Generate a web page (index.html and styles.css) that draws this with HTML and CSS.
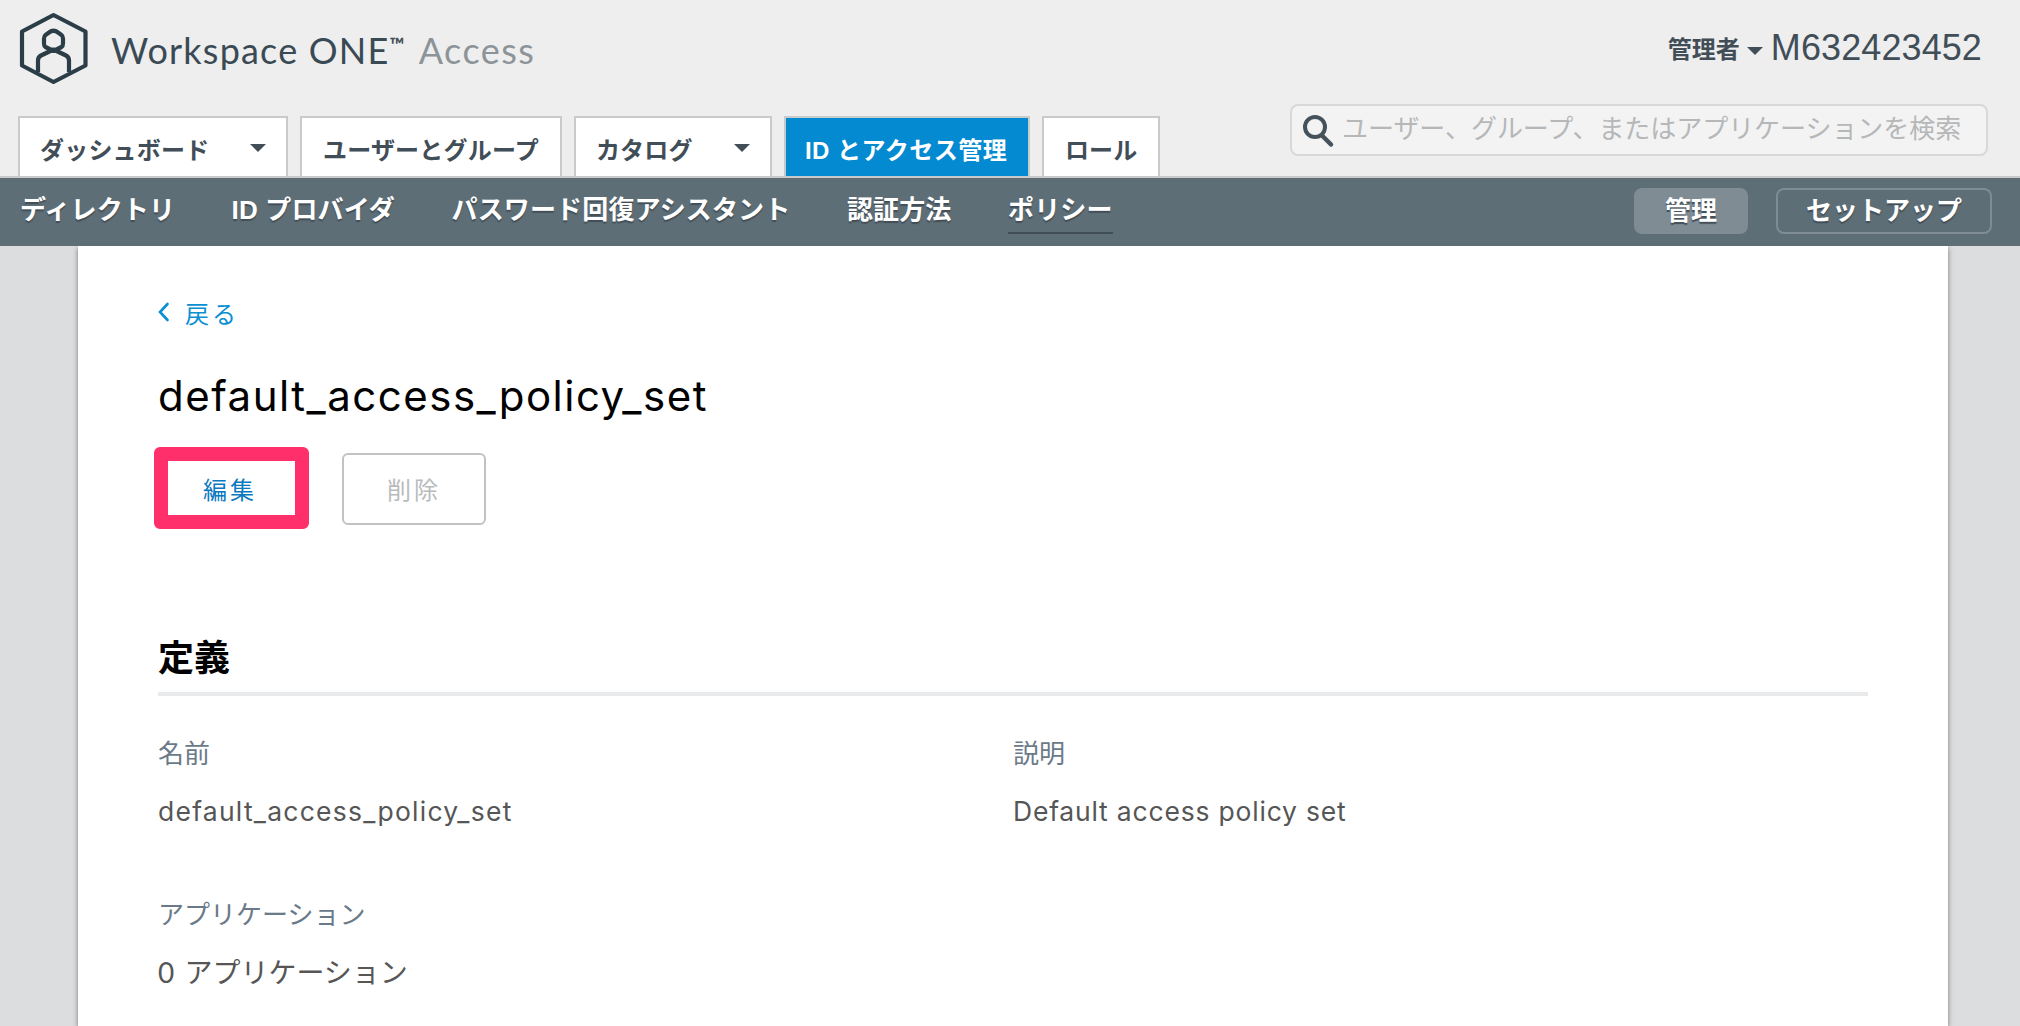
FILE: index.html
```html
<!DOCTYPE html>
<html lang="ja">
<head>
<meta charset="utf-8">
<title>Workspace ONE Access</title>
<link rel="stylesheet" href="styles.css">
</head>
<body>
<header class="header">
  <div class="brand">
    <svg class="brand-mark" width="72" height="76" viewBox="0 0 72 76" fill="none" stroke="#2b3d47" stroke-width="4.200" stroke-linejoin="round">
      <path d="M35.500 5 67.500 21.500v34L35.500 72 4 55.500v-34z"/>
      <path d="M31 22.500Q35.500 19 40 22.500L43.500 25Q45 26 45 28.500V33.500Q45 36 43.500 37L35.500 41 27.500 37Q26 36 26 33.500V28.500Q26 26 27.500 25z"/>
      <path d="M20 62V50.500Q20 47 23 45.500L35.500 39.500 48 45.500Q51 47 51 50.500V62"/>
    </svg>
    <span class="brand-name">Workspace ONE</span><span class="brand-tm">™</span><span class="brand-product">Access</span>
  </div>
  <div class="account">
    <span class="account-role">管理者</span><span class="caret"></span><span class="account-id">M632423452</span>
  </div>
  <nav class="tabs">
    <a class="tab tab-menu">ダッシュボード<span class="caret"></span></a>
    <a class="tab">ユーザーとグループ</a>
    <a class="tab tab-menu catalog">カタログ<span class="caret"></span></a>
    <a class="tab active">ID とアクセス管理</a>
    <a class="tab">ロール</a>
  </nav>
  <div class="search">
    <svg width="34" height="34" viewBox="0 0 34 34" fill="none" stroke="#46525b" stroke-linecap="round"><circle cx="13" cy="13" r="10" stroke-width="4"/><path d="M20.500 22l8.500 8.500" stroke-width="4.500"/></svg>
    <span>ユーザー、グループ、またはアプリケーションを検索</span>
  </div>
</header>
<nav class="subnav">
  <a>ディレクトリ</a>
  <a>ID プロバイダ</a>
  <a>パスワード回復アシスタント</a>
  <a>認証方法</a>
  <a class="current">ポリシー</a>
  <div class="modes"><button class="mode selected">管理</button><button class="mode setup">セットアップ</button></div>
</nav>
<main class="panel">
  <a class="back"><svg width="12" height="20" viewBox="0 0 12 20" fill="none" stroke="#0a8fd2" stroke-width="2.600" stroke-linecap="round"><path d="M9.500 2 2 10l7.500 8"/></svg>戻る</a>
  <h1 class="title">default_access_policy_set</h1>
  <div class="actions">
    <button class="action edit">編集</button>
    <button class="action delete">削除</button>
  </div>
  <h2 class="section">定義</h2>
  <dl class="fields">
    <div class="field"><dt>名前</dt><dd class="latin identifier">default_access_policy_set</dd></div>
    <div class="field"><dt>説明</dt><dd class="latin">Default access policy set</dd></div>
    <div class="field"><dt>アプリケーション</dt><dd class="count">0 アプリケーション</dd></div>
  </dl>
</main>
</body>
</html>
```
FILE: styles.css
```css
* { box-sizing: border-box; }
body {
  margin: 0;
  height: 1026px;
  overflow: hidden;
  display: flex;
  flex-direction: column;
  background: #dcdddf;
  font-family: "Liberation Sans", "Noto Sans CJK JP", sans-serif;
  color: #424e57;
}
button { font: inherit; padding: 0; }
.header {
  height: 178px;
  flex: none;
  display: grid;
  grid-template: 104px 72px / 1fr 698px;
  padding: 0 32px 0 18px;
  background: #eee;
  border-bottom: 2px solid #c8cacb;
}
.brand {
  display: flex;
  align-items: flex-start;
  padding-top: 10px;
  font: 36px/81px Lato, "Open Sans", sans-serif;
  letter-spacing: 1px;
}
.brand-mark { margin-right: 21px; }
.brand-name { color: #3a4a54; white-space: nowrap; letter-spacing: 1.2px; }
.brand-tm { font-size: 20px; line-height: 68px; font-weight: 700; letter-spacing: 0; }
.brand-product { margin-left: 14px; color: #8d9499; letter-spacing: 1.5px; }
.account {
  display: flex;
  justify-content: flex-end;
  padding-right: 6px;
  height: 94px;
  align-items: center;
}
.account-role { font-weight: 700; font-size: 24px; }
.caret {
  border: solid transparent;
  border-width: 8px 8px 0;
  border-top-color: #424e57;
}
.account .caret { margin: 8px 8px 0 7px; }
.account-id { font-size: 36px; padding-top: 2px; letter-spacing: 0.1px; }
.tabs {
  display: flex;
  gap: 12px;
  align-items: flex-end;
}
.tab {
  height: 60px;
  padding: 0 21px;
  border: 2px solid #c8cacb;
  border-bottom: 0;
  background: #fff;
  font-weight: 700;
  font-size: 24px;
  line-height: 66px;
  letter-spacing: 0.2px;
  white-space: nowrap;
}
.tab:last-child { padding-right: 20px; }
.tab-menu {
  width: 270px;
  display: flex;
  justify-content: space-between;
  padding-left: 20px;
}
.tab-menu.catalog { width: 198px; }
.tab-menu .caret { margin: 26px -1px 0 0; }
.tab.active { width: 246px; background: #048ad0; color: #fff; padding: 0 19px; letter-spacing: 0.5px; }
.search {
  height: 52px;
  display: flex;
  align-items: center;
  border: 2px solid #d7d8d8;
  border-radius: 8px;
  background: #f3f3f3;
  color: #b6b7b8;
  font-size: 26px;
  letter-spacing: -0.05px;
  white-space: nowrap;
  padding-left: 10px;
}
.search svg { margin: 2px 6px 0 0; }
.search span { margin-top: -7px; }
.subnav {
  height: 68px;
  flex: none;
  display: flex;
  align-items: flex-start;
  gap: 56.5px;
  padding: 10px 28px 0 20px;
  background: #5e6e76;
  color: #fff;
  font-weight: 700;
  font-size: 26px;
  line-height: 45px;
  letter-spacing: 0.15px;
  text-shadow: 0 2px 1px #424e57;
  white-space: nowrap;
}
.subnav a { height: 46px; }
.subnav .current { border-bottom: 2px solid #424e57; }
.modes { display: flex; gap: 28px; margin-left: auto; }
.mode {
  width: 114px;
  height: 46px;
  border: 2px solid #7f8c94;
  border-radius: 8px;
  background: none;
  color: #fff;
  line-height: 38px;
  padding-bottom: 1px;
  text-shadow: inherit;
}
.mode.selected { background: #7f8c94; }
.mode.setup { width: 216px; }
.panel {
  flex: 1;
  width: 1870px;
  margin-left: 78px;
  padding: 48px 80px 0;
  background: #fff;
  box-shadow: 0 2px 5px #777;
  clip-path: inset(0 -10px);
  font-family: Lato, "Noto Sans CJK JP", sans-serif;
}
.back {
  display: flex;
  align-items: center;
  height: 36px;
  color: #0a8fd2;
  font-size: 24px;
  letter-spacing: 3px;
}
.back svg { margin-right: 15px; }
.title {
  margin: 34px 0 0;
  height: 64px;
  font-family: Inter, "Open Sans", sans-serif;
  font-weight: 400;
  font-size: 42px;
  line-height: 64px;
  letter-spacing: 1.5px;
  color: #000;
}
.actions { display: flex; gap: 33px; margin: 19px 0 0 -4px; align-items: center; }
.action { background: #fff; font-size: 24px; letter-spacing: 3px; }
.edit {
  width: 155px;
  height: 82px;
  border: 14px solid #ff2f6c;
  border-radius: 6px;
  color: #0b79bf;
  padding-right: 3px;
}
.delete {
  width: 144px;
  height: 72px;
  margin-top: 2px;
  border: 2px solid #c1c2c3;
  border-radius: 6px;
  color: #b9babb;
  padding-bottom: 1px;
}
.section {
  margin: 103px 0 0;
  height: 64px;
  border-bottom: 4px solid #e8eaec;
  font-size: 36px;
  line-height: 51px;
  color: #000;
}
.fields { display: grid; grid-template-columns: 855px 1fr; margin: 38px 0 0; row-gap: 56px; }
.field { height: 105px; }
.fields dt { font-size: 26px; line-height: 38px; color: #6b7a88; }
.fields dd { margin: 19px 0 0; font-size: 28px; line-height: 40px; color: #565656; }
.fields .latin { font-family: Inter, "Open Sans", sans-serif; font-size: 26.5px; line-height: 41px; letter-spacing: 0.8px; }
.fields .identifier { letter-spacing: 1.25px; }
.fields .count { word-spacing: 3px; }
```
